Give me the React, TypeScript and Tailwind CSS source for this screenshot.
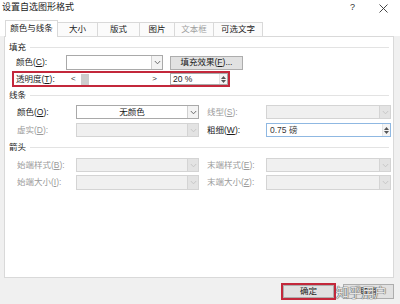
import clsx from "clsx";

const FONT = "font-['Liberation_Sans','Noto_Sans_CJK_SC',sans-serif]";

function Chevron({ disabled }: { disabled?: boolean }) {
  return (
    <svg width="7" height="5" viewBox="0 0 7 5" fill="none">
      <path
        d="M0.8 1L3.5 3.8L6.2 1"
        stroke={disabled ? "#c4c4c4" : "#606060"}
        strokeWidth="0.9"
      />
    </svg>
  );
}

function Spinner() {
  return (
    <div className="flex w-[8px] flex-col items-center justify-center gap-[1px] border-l border-[#e4e4e4] bg-[#f4f4f4]">
      <svg width="5" height="3" viewBox="0 0 5 3">
        <path d="M0 3L2.5 0L5 3Z" fill="#555" />
      </svg>
      <svg width="5" height="3" viewBox="0 0 5 3">
        <path d="M0 0L2.5 3L5 0Z" fill="#555" />
      </svg>
    </div>
  );
}

function Combo({
  className,
  disabled,
  children,
}: {
  className: string;
  disabled?: boolean;
  children?: React.ReactNode;
}) {
  return (
    <div
      className={clsx(
        "flex h-full border",
        disabled ? "border-[#d4d4d4] bg-[#f0f0f0]" : "border-[#a9a9a9] bg-white",
        className
      )}
    >
      <div className="flex flex-1 items-center justify-center text-[#1a1a1a]">{children}</div>
      <div
        className={clsx(
          "flex w-[11px] items-center justify-center border-l",
          disabled ? "border-[#d4d4d4] bg-[#e3e3e3]" : "border-[#d0d0d0] bg-[#f3f3f3]"
        )}
      >
        <Chevron disabled={disabled} />
      </div>
    </div>
  );
}

function Label({ text, k, disabled, className }: { text: string; k: string; disabled?: boolean; className: string }) {
  return (
    <div className={clsx("flex items-center whitespace-nowrap", disabled ? "text-[#9b9b9b]" : "text-[#1c1c1c]", className)}>
      {text}(<span className="underline underline-offset-1">{k}</span>):
    </div>
  );
}

function Section({ title }: { title: string }) {
  return (
    <div className="flex h-[12px] items-center gap-[4px] pl-[4px] pr-[4px] text-[#1c1c1c]">
      <span>{title}</span>
      <div className="h-px flex-1 bg-[#e3e3e3]" />
    </div>
  );
}

const tabs = ["大小", "版式", "图片", "文本框", "可选文字"];
const tabWidths = ["w-[40px]", "w-[42px]", "w-[35px]", "w-[39px]", "w-[49px]"];

export default function App() {
  return (
    <div className={clsx("relative flex h-[304px] w-[400px] flex-col bg-[#f0f0f0] text-[8.5px]", FONT)}>
      {/* Title bar */}
      <div className="flex h-[16px] items-center justify-between bg-white pl-[2px] pr-[12px]">
        <span className="text-[9px] text-[#1a1a1a]">设置自选图形格式</span>
        <div className="flex items-center gap-[24px] text-[#333]">
          <span className="text-[9px]">?</span>
          <svg width="9" height="9" viewBox="0 0 9 9">
            <path d="M0.5 0.5L8.5 8.5M8.5 0.5L0.5 8.5" stroke="#333" strokeWidth="0.9" />
          </svg>
        </div>
      </div>

      {/* Tabs */}
      <div className="flex h-[20px] items-end bg-white pl-[5px]">
        <div className="relative z-10 -mb-px flex h-[17px] w-[53px] items-center justify-center border border-b-0 border-[#d9d9d9] bg-white pb-[1px] text-[#1a1a1a]">
          颜色与线条
        </div>
        {tabs.map((t, i) => (
          <div
            key={t}
            className={clsx(
              "flex h-[14px] items-center justify-center border-t border-r border-[#d9d9d9] bg-[#fbfbfb]",
              tabWidths[i],
              t === "文本框" ? "text-[#a0a0a0]" : "text-[#1a1a1a]"
            )}
          >
            {t}
          </div>
        ))}
      </div>

      {/* Panel */}
      <div className="mx-[4px] flex h-[242px] w-[390px] flex-col border border-[#d9d9d9] bg-white">
        <div className="mt-[4px]">
          <Section title="填充" />
        </div>

        <div className="mt-[2px] flex h-[15px] items-center pl-[11px]">
          <Label text="颜色" k="C" className="w-[50px]" />
          <Combo className="w-[97px]" />
          <div className="ml-[7px] flex h-[14px] w-[73px] items-center justify-center border border-[#adadad] bg-[#e1e1e1] text-[#1a1a1a]">
            填充效果(<span className="underline underline-offset-1">F</span>)...
          </div>
        </div>

        <div className="ml-[7px] mt-[1px] flex h-[16px] w-[218px] items-center border-2 border-[#c3283b] pl-[2px]">
          <Label text="透明度" k="T" className="w-[50px]" />
          <div className="flex h-[11px] w-[97px] items-center bg-white">
            <span className="ml-[5px] text-[8px] text-[#333]">&lt;</span>
            <div className="ml-[5px] h-full w-[8px] bg-[#cdcdcd]" />
            <div className="flex-1" />
            <span className="mr-[6px] text-[8px] text-[#333]">&gt;</span>
          </div>
          <div className="ml-[7px] flex h-[12px] w-[58px] border border-[#a9a9a9] bg-white">
            <div className="flex flex-1 items-center pl-[2px] text-[#1a1a1a]">20 %</div>
            <Spinner />
          </div>
        </div>

        <div className="mt-[2px]">
          <Section title="线条" />
        </div>

        <div className="mt-[4px] flex h-[14px] items-center pl-[12px]">
          <Label text="颜色" k="O" className="w-[59px]" />
          <Combo className="w-[123px]">无颜色</Combo>
          <Label text="线型" k="S" disabled className="ml-[8px] w-[59px]" />
          <Combo className="w-[125px]" disabled />
        </div>

        <div className="mt-[4px] flex h-[14px] items-center pl-[12px]">
          <Label text="虚实" k="D" disabled className="w-[59px]" />
          <Combo className="w-[123px]" disabled />
          <Label text="粗细" k="W" className="ml-[8px] w-[59px]" />
          <div className="flex h-full w-[125px] border border-[#8fb8e2] bg-white">
            <div className="flex flex-1 items-center pl-[3px] text-[#3a3a3a]">0.75 磅</div>
            <Spinner />
          </div>
        </div>

        <div className="mt-[4px]">
          <Section title="箭头" />
        </div>

        <div className="mt-[5px] flex h-[14px] items-center pl-[12px]">
          <Label text="始端样式" k="B" disabled className="w-[59px]" />
          <Combo className="w-[123px]" disabled />
          <Label text="末端样式" k="E" disabled className="ml-[8px] w-[59px]" />
          <Combo className="w-[125px]" disabled />
        </div>

        <div className="mt-[3px] flex h-[15px] items-center pl-[12px]">
          <Label text="始端大小" k="I" disabled className="w-[59px]" />
          <Combo className="w-[123px]" disabled />
          <Label text="末端大小" k="Z" disabled className="ml-[8px] w-[59px]" />
          <Combo className="w-[125px]" disabled />
        </div>
      </div>

      {/* Buttons */}
      <div className="mt-[5px] flex items-center pl-[281px]">
        <div className="border-2 border-[#c3283b]">
          <div className="flex h-[13px] w-[51px] items-center justify-center border border-[#adadad] bg-[#e1e1e1] text-[#1a1a1a]">
            确定
          </div>
        </div>
        <div className="ml-[7px] flex h-[15px] w-[51px] items-center justify-center border border-[#adadad] bg-[#e1e1e1] text-[#1a1a1a]">
          取消
        </div>
      </div>

      {/* Watermark */}
      <div className="pointer-events-none absolute left-[336px] top-[283px] text-[13px] tracking-[-0.3px] text-[#e4e4e4] [text-shadow:0_0_1px_#555,0_0_1px_#555,0_0_1px_#888]">
        知乎用户
      </div>
    </div>
  );
}
